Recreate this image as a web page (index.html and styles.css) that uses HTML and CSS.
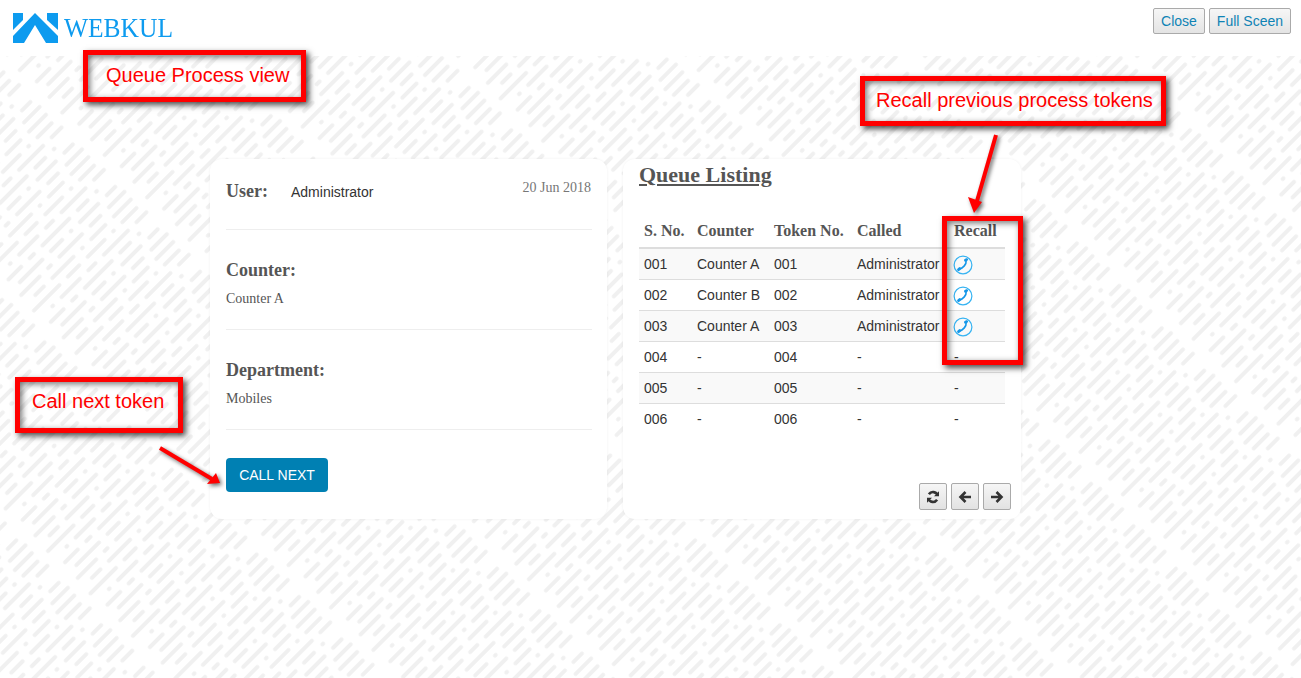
FILE: index.html
```html
<!DOCTYPE html>
<html>
<head>
  <title>Queue Process</title>
  <link rel="stylesheet" href="styles.css">
</head>
<body>
  <header class="top-bar">
    <div class="logo">
      <svg class="logo-mark" width="45" height="30" viewBox="0 0 45 30">
        <polygon fill="#0d9bef" points="0,0 10,0 10,7 0,17"/>
        <polygon fill="#0d9bef" points="45,0 34,0 34,7 45,17"/>
        <polygon fill="#0d9bef" points="22,0 0,23 0,30 11,30 22,12 33,30 45,30 45,23"/>
      </svg>
      <span class="logo-text">WEBKUL</span>
    </div>
    <div class="top-actions">
      <button class="top-btn">Close</button>
      <button class="top-btn">Full Sceen</button>
    </div>
  </header>

  <main class="stage">
    <section class="card user-card">
      <div class="info-row">
        <div class="user-line">
          <h3>User:</h3>
          <span class="user-name">Administrator</span>
          <span class="date">20 Jun 2018</span>
        </div>
      </div>
      <div class="info-row">
        <h3>Counter:</h3>
        <p>Counter A</p>
      </div>
      <div class="info-row">
        <h3>Department:</h3>
        <p>Mobiles</p>
      </div>
      <button class="call-next">CALL NEXT</button>
    </section>

    <section class="card queue-card">
      <h2>Queue Listing</h2>
      <table class="queue-table">
        <thead>
          <tr><th class="col-no">S. No.</th><th class="col-counter">Counter</th><th class="col-token">Token No.</th><th class="col-called">Called</th><th>Recall</th></tr>
        </thead>
        <tbody>
          <tr><td>001</td><td>Counter A</td><td>001</td><td>Administrator</td><td><svg class="recall" width="20" height="20" viewBox="0 0 20 20"><circle cx="10" cy="10" r="8.900"/><path class="cord" d="M13.200 5.500c.3 3.800-3 7.600-7.200 8.700"/><path class="grip" d="M12.400 5.200l1.300-.6M6.700 13.600l-1.200 1"/></svg></td></tr>
          <tr><td>002</td><td>Counter B</td><td>002</td><td>Administrator</td><td><svg class="recall" width="20" height="20" viewBox="0 0 20 20"><circle cx="10" cy="10" r="8.900"/><path class="cord" d="M13.200 5.500c.3 3.800-3 7.600-7.200 8.700"/><path class="grip" d="M12.400 5.200l1.300-.6M6.700 13.600l-1.200 1"/></svg></td></tr>
          <tr><td>003</td><td>Counter A</td><td>003</td><td>Administrator</td><td><svg class="recall" width="20" height="20" viewBox="0 0 20 20"><circle cx="10" cy="10" r="8.900"/><path class="cord" d="M13.200 5.500c.3 3.800-3 7.600-7.200 8.700"/><path class="grip" d="M12.400 5.200l1.300-.6M6.700 13.600l-1.200 1"/></svg></td></tr>
          <tr><td>004</td><td>-</td><td>004</td><td>-</td><td>-</td></tr>
          <tr><td>005</td><td>-</td><td>005</td><td>-</td><td>-</td></tr>
          <tr><td>006</td><td>-</td><td>006</td><td>-</td><td>-</td></tr>
        </tbody>
      </table>
      <div class="pager">
        <button class="pager-btn">
          <svg width="14" height="14" viewBox="0 0 14 14"><path d="M11.700 5.400A5 5 0 0 0 2.900 4.200M2.300 8.600a5 5 0 0 0 8.800 1.200"/><path class="fill" d="M13 1.200v5H8zM1 12.800v-5h5z"/></svg>
        </button>
        <button class="pager-btn">
          <svg width="14" height="14" viewBox="0 0 14 14"><path d="M13 7H3M7.500 2L2.500 7l5 5"/></svg>
        </button>
        <button class="pager-btn">
          <svg width="14" height="14" viewBox="0 0 14 14"><path d="M1 7h10M6.500 2l5 5-5 5"/></svg>
        </button>
      </div>
    </section>
  </main>

  <!-- red notes drawn over the screenshot -->
  <div class="note note-view">Queue Process view</div>
  <div class="note note-recall">Recall previous process tokens</div>
  <div class="note note-call">Call next token</div>
  <div class="note note-column"></div>

  <svg class="arrow arrow-recall" width="40" height="90" viewBox="0 0 40 90">
    <path d="M31 2L12 68" stroke="#f00" stroke-width="4" fill="none"/>
    <polygon fill="#f00" points="3,64 17,69 9,80"/>
  </svg>
  <svg class="arrow arrow-call" width="80" height="50" viewBox="0 0 80 50">
    <path d="M2 2L54 33" stroke="#f00" stroke-width="4" fill="none"/>
    <polygon fill="#f00" points="62,37 49,38 58,27"/>
  </svg>
</body>
</html>
```

FILE: styles.css
```css
* {
  box-sizing: border-box;
}

body {
  margin: 0;
  background-color: #fff;
  font-family: "Liberation Sans", Arial, sans-serif;
  font-size: 14px;
  color: #333;
}

.top-bar {
  height: 56px;
  padding: 8px 10px 0 13px;
  display: flex;
  justify-content: space-between;
  align-items: flex-start;
  background-color: #fff;
}

.logo {
  display: flex;
  align-items: center;
  gap: 6px;
  margin-top: 5px;
}

.logo-mark {
  display: block;
}

.logo-text {
  font-family: "Liberation Serif", serif;
  font-size: 28px;
  line-height: 30px;
  color: #0d9bef;
  transform: scaleX(0.91);
  transform-origin: left center;
}

.top-actions {
  display: flex;
  gap: 4px;
}

.top-btn {
  height: 26px;
  padding: 0 7px;
  font-family: "Liberation Sans", Arial, sans-serif;
  font-size: 14px;
  color: #0e83b5;
  background: linear-gradient(#f6f6f6, #e4e4e4);
  border: 1px solid #aaa;
  border-radius: 2px;
}

.stage {
  height: 622px;
  padding: 103px 0 0 210px;
  display: flex;
  align-items: flex-start;
  gap: 16px;
  background-color: #fff;
  background-image: url("data:image/svg+xml,%3Csvg xmlns='http://www.w3.org/2000/svg' width='1301' height='622'%3E%3Cdefs%3E%3Cpattern id='p' width='160' height='60' patternUnits='userSpaceOnUse' patternTransform='rotate(-45)'%3E%3Cg fill='%23f0f0f0'%3E%3Crect x='4' y='2' width='30' height='4' rx='2'/%3E%3Crect x='42' y='2' width='8' height='4' rx='2'/%3E%3Crect x='58' y='2' width='36' height='4' rx='2'/%3E%3Crect x='102' y='2' width='18' height='4' rx='2'/%3E%3Crect x='128' y='2' width='26' height='4' rx='2'/%3E%3Crect x='14' y='12' width='16' height='4' rx='2'/%3E%3Crect x='38' y='12' width='34' height='4' rx='2'/%3E%3Crect x='80' y='12' width='5' height='4' rx='2'/%3E%3Crect x='93' y='12' width='24' height='4' rx='2'/%3E%3Crect x='125' y='12' width='28' height='4' rx='2'/%3E%3Crect x='2' y='22' width='40' height='4' rx='2'/%3E%3Crect x='50' y='22' width='20' height='4' rx='2'/%3E%3Crect x='78' y='22' width='28' height='4' rx='2'/%3E%3Crect x='114' y='22' width='5' height='4' rx='2'/%3E%3Crect x='127' y='22' width='24' height='4' rx='2'/%3E%3Crect x='18' y='32' width='5' height='4' rx='2'/%3E%3Crect x='31' y='32' width='30' height='4' rx='2'/%3E%3Crect x='69' y='32' width='14' height='4' rx='2'/%3E%3Crect x='91' y='32' width='38' height='4' rx='2'/%3E%3Crect x='137' y='32' width='18' height='4' rx='2'/%3E%3Crect x='6' y='42' width='22' height='4' rx='2'/%3E%3Crect x='36' y='42' width='10' height='4' rx='2'/%3E%3Crect x='54' y='42' width='42' height='4' rx='2'/%3E%3Crect x='104' y='42' width='18' height='4' rx='2'/%3E%3Crect x='130' y='42' width='5' height='4' rx='2'/%3E%3Crect x='12' y='52' width='36' height='4' rx='2'/%3E%3Crect x='56' y='52' width='20' height='4' rx='2'/%3E%3Crect x='84' y='52' width='5' height='4' rx='2'/%3E%3Crect x='97' y='52' width='30' height='4' rx='2'/%3E%3Crect x='135' y='52' width='16' height='4' rx='2'/%3E%3C/g%3E%3C/pattern%3E%3C/defs%3E%3Crect width='1301' height='622' fill='url(%23p)'/%3E%3C/svg%3E");
}

.card {
  width: 397px;
  height: 360px;
  background-color: #fff;
  border-radius: 12px;
  box-shadow: 0 0 3px rgba(0, 0, 0, 0.06);
}

.user-card {
  padding: 0 15px 0 16px;
}

.info-row {
  height: 100px;
  padding-top: 29px;
  border-bottom: 1px solid #eee;
  color: #555;
  font-family: "Liberation Serif", serif;
}

.info-row:first-child {
  height: 71px;
  padding-top: 21px;
}

.info-row h3 {
  margin: 0;
  font-size: 18px;
  line-height: 22px;
  font-weight: bold;
  color: #555;
}

.info-row p {
  margin: 10px 0 0;
  font-size: 14px;
  line-height: 16px;
}

.user-line {
  display: flex;
  align-items: flex-start;
}

.user-name {
  margin-left: 23px;
  margin-top: 4px;
  font-family: "Liberation Sans", Arial, sans-serif;
  font-size: 14px;
  line-height: 16px;
  color: #333;
}

.date {
  margin-left: auto;
  margin-right: 1px;
  font-size: 14px;
  line-height: 16px;
  color: #777;
}

.call-next {
  display: block;
  width: 102px;
  height: 34px;
  margin-top: 28px;
  padding: 0;
  font-family: "Liberation Sans", Arial, sans-serif;
  font-size: 14px;
  color: #fff;
  background-color: #0080b3;
  border: 0;
  border-radius: 4px;
}

.queue-card {
  position: relative;
  width: 398px;
  padding: 0 16px;
}

.queue-card h2 {
  margin: 0;
  font-family: "Liberation Serif", serif;
  font-size: 22px;
  line-height: 32px;
  font-weight: bold;
  color: #555;
  text-decoration: underline;
}

.queue-table {
  width: 366px;
  margin-top: 24px;
  border-collapse: collapse;
  table-layout: fixed;
}

.queue-table th {
  height: 33px;
  padding: 0 5px;
  font-family: "Liberation Serif", serif;
  font-size: 16px;
  font-weight: bold;
  text-align: left;
  color: #555;
  border-bottom: 2px solid #ddd;
  white-space: nowrap;
}

.col-no {
  width: 53px;
}

.col-counter {
  width: 77px;
}

.col-token {
  width: 83px;
}

.col-called {
  width: 97px;
}

.queue-table td {
  height: 31px;
  padding: 0 5px;
  border-top: 1px solid #ddd;
  white-space: nowrap;
}

.queue-table tbody tr:first-child td {
  border-top: 0;
}

.queue-table tbody tr:nth-child(odd) {
  background-color: #f9f9f9;
}

.queue-table tbody tr:last-child {
  background-color: transparent;
}

.recall {
  display: block;
  margin: 2px 0 0 -1px;
}

.recall circle {
  fill: none;
  stroke: #36b3f2;
  stroke-width: 1.200;
}

.recall path {
  fill: none;
  stroke: #1597e8;
  stroke-linecap: round;
}

.recall .cord {
  stroke-width: 1.600;
}

.recall .grip {
  stroke-width: 2.800;
}

.pager {
  position: absolute;
  right: 10px;
  bottom: 9px;
  display: flex;
  gap: 4px;
}

.pager-btn {
  display: flex;
  align-items: center;
  justify-content: center;
  width: 28px;
  height: 27px;
  padding: 0;
  background: linear-gradient(#f6f6f6, #e2e2e2);
  border: 1px solid #aaa;
  border-radius: 2px;
}

.pager-btn path {
  fill: none;
  stroke: #333;
  stroke-width: 2.600;
}

.pager-btn path.fill {
  fill: #333;
  stroke: none;
}

.note {
  position: absolute;
  border: 5px solid #f00;
  box-shadow: 3px 3px 6px rgba(0, 0, 0, 0.7), inset 2px 2px 6px rgba(0, 0, 0, 0.55);
  color: #f00;
  font-size: 20px;
  line-height: 23px;
  white-space: nowrap;
}

.note-view {
  left: 83px;
  top: 50px;
  width: 223px;
  height: 52px;
  padding: 9px 0 0 18px;
}

.note-recall {
  left: 860px;
  top: 76px;
  width: 306px;
  height: 50px;
  padding: 8px 0 0 11px;
}

.note-call {
  left: 15px;
  top: 377px;
  width: 168px;
  height: 56px;
  padding: 8px 0 0 12px;
}

.note-column {
  left: 942px;
  top: 216px;
  width: 81px;
  height: 149px;
}

.arrow {
  position: absolute;
  filter: drop-shadow(2px 2px 2px rgba(0, 0, 0, 0.6));
}

.arrow-recall {
  left: 965px;
  top: 133px;
}

.arrow-call {
  left: 158px;
  top: 446px;
}
```
